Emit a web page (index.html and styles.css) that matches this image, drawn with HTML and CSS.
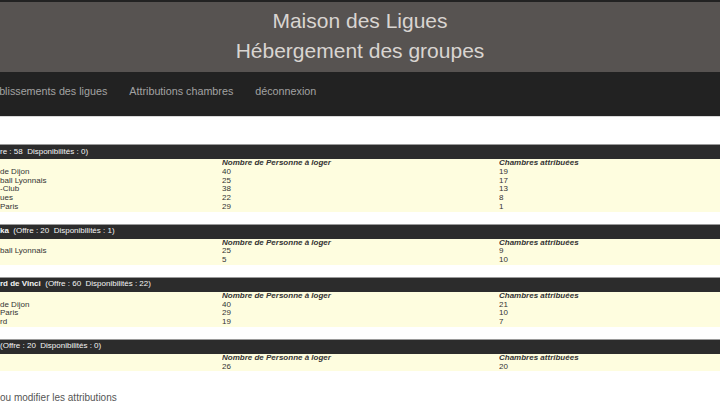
FILE: index.html
```html
<!DOCTYPE html>
<html lang="fr">
<head>
<meta charset="utf-8">
<title>Maison des Ligues - Hébergement des groupes</title>
<link rel="stylesheet" href="styles.css">
</head>
<body>
<header class="site-header">
  <h1 class="site-header__title">Maison des Ligues</h1>
  <h2 class="site-header__subtitle">Hébergement des groupes</h2>
</header>
<nav class="navbar">
  <ul class="navbar__list">
    <li><a class="navbar__link" href="#">Établissements des ligues</a></li>
    <li><a class="navbar__link" href="#">Attributions chambres</a></li>
    <li><a class="navbar__link" href="#">déconnexion</a></li>
  </ul>
</nav>
<main class="content">
  <table class="lodging">
    <colgroup><col class="lodging__col-name"><col class="lodging__col-people"><col></colgroup>
    <thead>
      <tr><th colspan="3" class="lodging__title">re : 58&nbsp; Disponibilités : 0)</th></tr>
    </thead>
    <tbody>
      <tr class="lodging__head"><td></td><td>Nombre de Personne à loger</td><td>Chambres attribuées</td></tr>
      <tr><td>de Dijon</td><td>40</td><td>19</td></tr>
      <tr><td>ball Lyonnais</td><td>25</td><td>17</td></tr>
      <tr><td>-Club</td><td>38</td><td>13</td></tr>
      <tr><td>ues</td><td>22</td><td>8</td></tr>
      <tr class="lodging__last"><td>Paris</td><td>29</td><td>1</td></tr>
    </tbody>
  </table>

  <table class="lodging">
    <colgroup><col class="lodging__col-name"><col class="lodging__col-people"><col></colgroup>
    <thead>
      <tr><th colspan="3" class="lodging__title"><strong>ka</strong>&nbsp; (Offre : 20&nbsp; Disponibilités : 1)</th></tr>
    </thead>
    <tbody>
      <tr class="lodging__head"><td></td><td>Nombre de Personne à loger</td><td>Chambres attribuées</td></tr>
      <tr><td>ball Lyonnais</td><td>25</td><td>9</td></tr>
      <tr class="lodging__last"><td></td><td>5</td><td>10</td></tr>
    </tbody>
  </table>

  <table class="lodging">
    <colgroup><col class="lodging__col-name"><col class="lodging__col-people"><col></colgroup>
    <thead>
      <tr><th colspan="3" class="lodging__title"><strong>rd de Vinci</strong>&nbsp; (Offre : 60&nbsp; Disponibilités : 22)</th></tr>
    </thead>
    <tbody>
      <tr class="lodging__head"><td></td><td>Nombre de Personne à loger</td><td>Chambres attribuées</td></tr>
      <tr><td>de Dijon</td><td>40</td><td>21</td></tr>
      <tr><td>Paris</td><td>29</td><td>10</td></tr>
      <tr class="lodging__last"><td>rd</td><td>19</td><td>7</td></tr>
    </tbody>
  </table>

  <table class="lodging">
    <colgroup><col class="lodging__col-name"><col class="lodging__col-people"><col></colgroup>
    <thead>
      <tr><th colspan="3" class="lodging__title">(Offre : 20&nbsp; Disponibilités : 0)</th></tr>
    </thead>
    <tbody>
      <tr class="lodging__head"><td></td><td>Nombre de Personne à loger</td><td>Chambres attribuées</td></tr>
      <tr class="lodging__last"><td></td><td>26</td><td>20</td></tr>
    </tbody>
  </table>

  <p class="content__link"><a href="#">ou modifier les attributions</a></p>
</main>
</body>
</html>
```
FILE: styles.css
```css
html, body {
  margin: 0;
  padding: 0;
  background: #ffffff;
  overflow: hidden;
}

body {
  font-family: "Liberation Sans", Arial, sans-serif;
  color: #333;
}

.site-header {
  background: #575351;
  border-top: 2px solid #222;
  height: 70px;
  display: flex;
  flex-direction: column;
  align-items: center;
  color: #d9d5d1;
}

.site-header__title,
.site-header__subtitle {
  margin: 0;
  font-weight: normal;
  font-size: 21px;
  line-height: 30px;
}

.site-header__title {
  padding-top: 4px;
}

.navbar {
  background: #222222;
  height: 45px;
  box-sizing: border-box;
  padding-bottom: 7px;
  border-bottom: 1px solid #d8d8d8;
  display: flex;
  align-items: center;
  overflow: hidden;
}

.navbar__list {
  list-style: none;
  margin: 0 0 0 -28px;
  padding: 0;
  display: flex;
}

.navbar__link {
  display: block;
  padding: 0 11px;
  color: #a3a3a3;
  text-decoration: none;
  font-size: 10.75px;
  line-height: 14px;
  white-space: nowrap;
}

.content {
  padding-top: 27px;
}

.lodging {
  width: 100%;
  border-collapse: collapse;
  table-layout: fixed;
  margin-bottom: 12px;
  font-size: 8px;
  line-height: 8.75px;
}

.lodging__col-name { width: 222px; }
.lodging__col-people { width: 277px; }

.lodging__title {
  background: #2c2c2c;
  border-top: 1px solid #9a9a9a;
  color: #f4f4f4;
  font-weight: normal;
  text-align: left;
  height: 14px;
  padding: 0;
  white-space: nowrap;
}

.lodging__title strong {
  font-weight: bold;
}

.lodging tbody td {
  background: #fefddf;
  padding: 0;
  color: #333;
  white-space: nowrap;
  overflow: hidden;
}

.lodging__head td {
  font-weight: bold;
  font-style: italic;
  color: #111;
  padding-top: 1px;
}

.lodging__last td {
  padding-bottom: 1px;
}

.content__link {
  margin: 21px 0 0 0;
  font-size: 10px;
}

.content__link a {
  color: #555;
  text-decoration: none;
}
```
